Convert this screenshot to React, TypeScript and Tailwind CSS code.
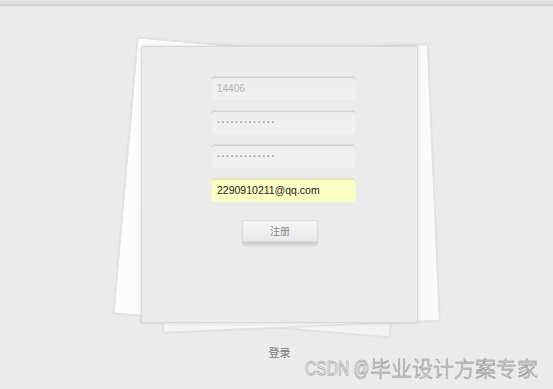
import React from "react";

// Register form on a stack of paper sheets, old-school skeuomorphic look.

const FONT = "font-['Liberation_Sans','Noto_Sans_CJK_SC',sans-serif]";

function Field({ children, autofill }: { children: React.ReactNode; autofill?: boolean }) {
  return (
    <div
      className={`flex h-[24px] w-[145px] items-center rounded-[4px] pl-[6px] shadow-[inset_0_1px_1px_rgba(0,0,0,0.12)] ${
        autofill
          ? "bg-[#fbffc4] border-t border-[#e2e2c8]"
          : "bg-gradient-to-b from-[#eeeeee] to-[#f1f1f1] border-t border-[#dddddd]"
      }`}
    >
      {children}
    </div>
  );
}

function Dots() {
  return (
    <span className="text-[11px] leading-none tracking-[0.85px] text-[#a3a3a3] font-bold">
      ·············
    </span>
  );
}

export default function App() {
  return (
    <div className={`relative h-[389px] w-full overflow-hidden bg-[#ebebeb] ${FONT}`}>
      {/* top rule */}
      <div className="h-[1px] bg-[#e6e6e6]" />
      <div className="h-[3px] bg-[#dfdfdf]" />
      <div className="h-[2px] bg-[#d2d2d2]" />
      <div className="h-[1px] bg-[#e4e4e4]" />

      <div className="flex justify-center pl-[6px] pt-[39px]">
        <div className="relative h-[277px] w-[277px]">
          {/* sheets behind */}
          <div className="absolute left-[-16px] top-[3px] h-[277px] w-[277px] rotate-[5deg] border border-[#e2e2e2] bg-gradient-to-r from-[#fdfdfd] to-[#f2f2f2] shadow-[0_0_2px_rgba(0,0,0,0.12)]" />
          <div className="absolute left-[16px] top-[3.5px] h-[277px] w-[277px] rotate-[-2.5deg] border border-[#e2e2e2] bg-gradient-to-l from-[#fbfbfb] to-[#f3f3f3] shadow-[0_0_2px_rgba(0,0,0,0.12)]" />

          {/* card */}
          <div className="relative flex h-full w-full flex-col border border-[#d9d9d9] bg-[#ebebeb] shadow-[0_0_4px_rgba(0,0,0,0.12)]">
            <div className="flex flex-col gap-[10px] pl-[69px] pt-[29px]">
              <Field>
                <span className="text-[10px] text-[#b3b3b3]">14406</span>
              </Field>
              <Field>
                <Dots />
              </Field>
              <Field>
                <Dots />
              </Field>
              <Field autofill>
                <span className="text-[10.5px] text-[#222222]">2290910211@qq.com</span>
              </Field>
            </div>
            <div className="mt-[18px] flex justify-center pl-[1px]">
              <button className="h-[22px] w-[76px] rounded-[3px] border border-[#dadada] bg-gradient-to-b from-[#f6f6f6] to-[#e9e9e9] text-[10px] text-[#888888] shadow-[0_2px_0_#cfcfcf,0_4px_2px_rgba(0,0,0,0.1)]">
                注册
              </button>
            </div>
          </div>
        </div>
      </div>

      <p className="mt-[22px] pl-[6px] text-center text-[11px] leading-[16px] text-[#777777]">登录</p>

      {/* watermark */}
      <div className="absolute left-[305px] top-[356px] flex items-center whitespace-nowrap text-[#f6f6f6] [-webkit-text-stroke:0.5px_#8c8c8c] [text-shadow:0_1px_1px_rgba(0,0,0,0.15)]">
        <span className="inline-block w-[65px]">
          <span className="inline-block origin-left scale-x-[0.78] text-[20px] leading-[24px]">CSDN @</span>
        </span>
        <span className="text-[21px] font-light leading-[24px]">毕业设计方案专家</span>
      </div>
    </div>
  );
}
